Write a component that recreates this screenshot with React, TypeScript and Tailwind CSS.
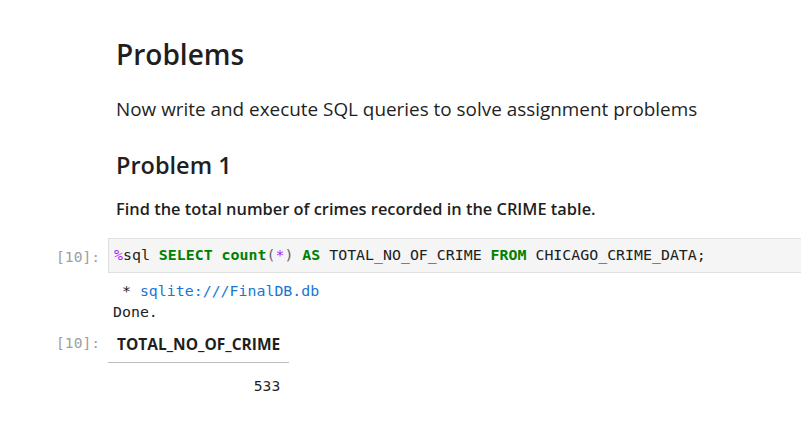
import React from 'react'

const mono = { fontFamily: '"DejaVu Sans Mono", monospace' }

function Prompt({ label }: { label?: string }) {
  return (
    <div className="w-[108px] shrink-0 pr-[8px] text-right text-[14.6px] text-[#a0a0a0]" style={mono}>
      {label}
    </div>
  )
}

const kw = 'text-[#008000] font-bold'

export default function App() {
  return (
    <div className="w-[801px] h-[426px] overflow-hidden bg-white text-[#1f1f1f]" style={{ fontFamily: '"Open Sans", sans-serif' }}>
      <div className="flex pt-[34px]">
        <Prompt />
        <div className="pl-[8px]">
          <h1 className="text-[28px] font-semibold leading-[40px]">Problems</h1>
          <p className="mt-[21px] text-[18.9px] leading-[28px]">Now write and execute SQL queries to solve assignment problems</p>
          <h2 className="mt-[25px] text-[23.5px] font-semibold leading-[34px]">Problem 1</h2>
          <p className="mt-[14px] text-[16.4px] font-semibold leading-[25px]">Find the total number of crimes recorded in the CRIME table.</p>
        </div>
      </div>

      <div className="flex items-start mt-[17px]">
        <div className="pt-[8px]"><Prompt label="[10]:" /></div>
        <div className="flex-1 h-[35px] bg-[#f5f5f5] border border-r-0 border-[#e0e0e0] flex items-center px-[5px] text-[14.9px] text-[#212121]" style={mono}>
          <span className="whitespace-pre">
            <span className="text-[#aa22ff]">%</span>sql <span className={kw}>SELECT</span> <span className={kw}>count</span><span className="text-[#666]">(</span><span className="text-[#aa22ff]">*</span><span className="text-[#666]">)</span> <span className={kw}>AS</span> TOTAL_NO_OF_CRIME <span className={kw}>FROM</span> CHICAGO_CRIME_DATA;
          </span>
        </div>
      </div>

      <div className="flex mt-[8px]">
        <Prompt />
        <div className="pl-[5px] text-[14.9px] leading-[21px] whitespace-pre text-[#212121]" style={mono}>
          <div> * <span className="text-[#1976d2]">sqlite:///FinalDB.db</span></div>
          <div>Done.</div>
        </div>
      </div>

      <div className="flex mt-[4px]">
        <div className="pt-[5px]"><Prompt label="[10]:" /></div>
        <table className="text-[15.5px] border-collapse">
          <thead>
            <tr>
              <th className="px-[9px] pt-[6px] pb-[6px] font-bold text-right border-b border-[#bdbdbd]">TOTAL_NO_OF_CRIME</th>
            </tr>
          </thead>
          <tbody>
            <tr>
              <td className="px-[9px] pt-[12px] text-right text-[14.6px]" style={mono}>533</td>
            </tr>
          </tbody>
        </table>
      </div>
    </div>
  )
}
